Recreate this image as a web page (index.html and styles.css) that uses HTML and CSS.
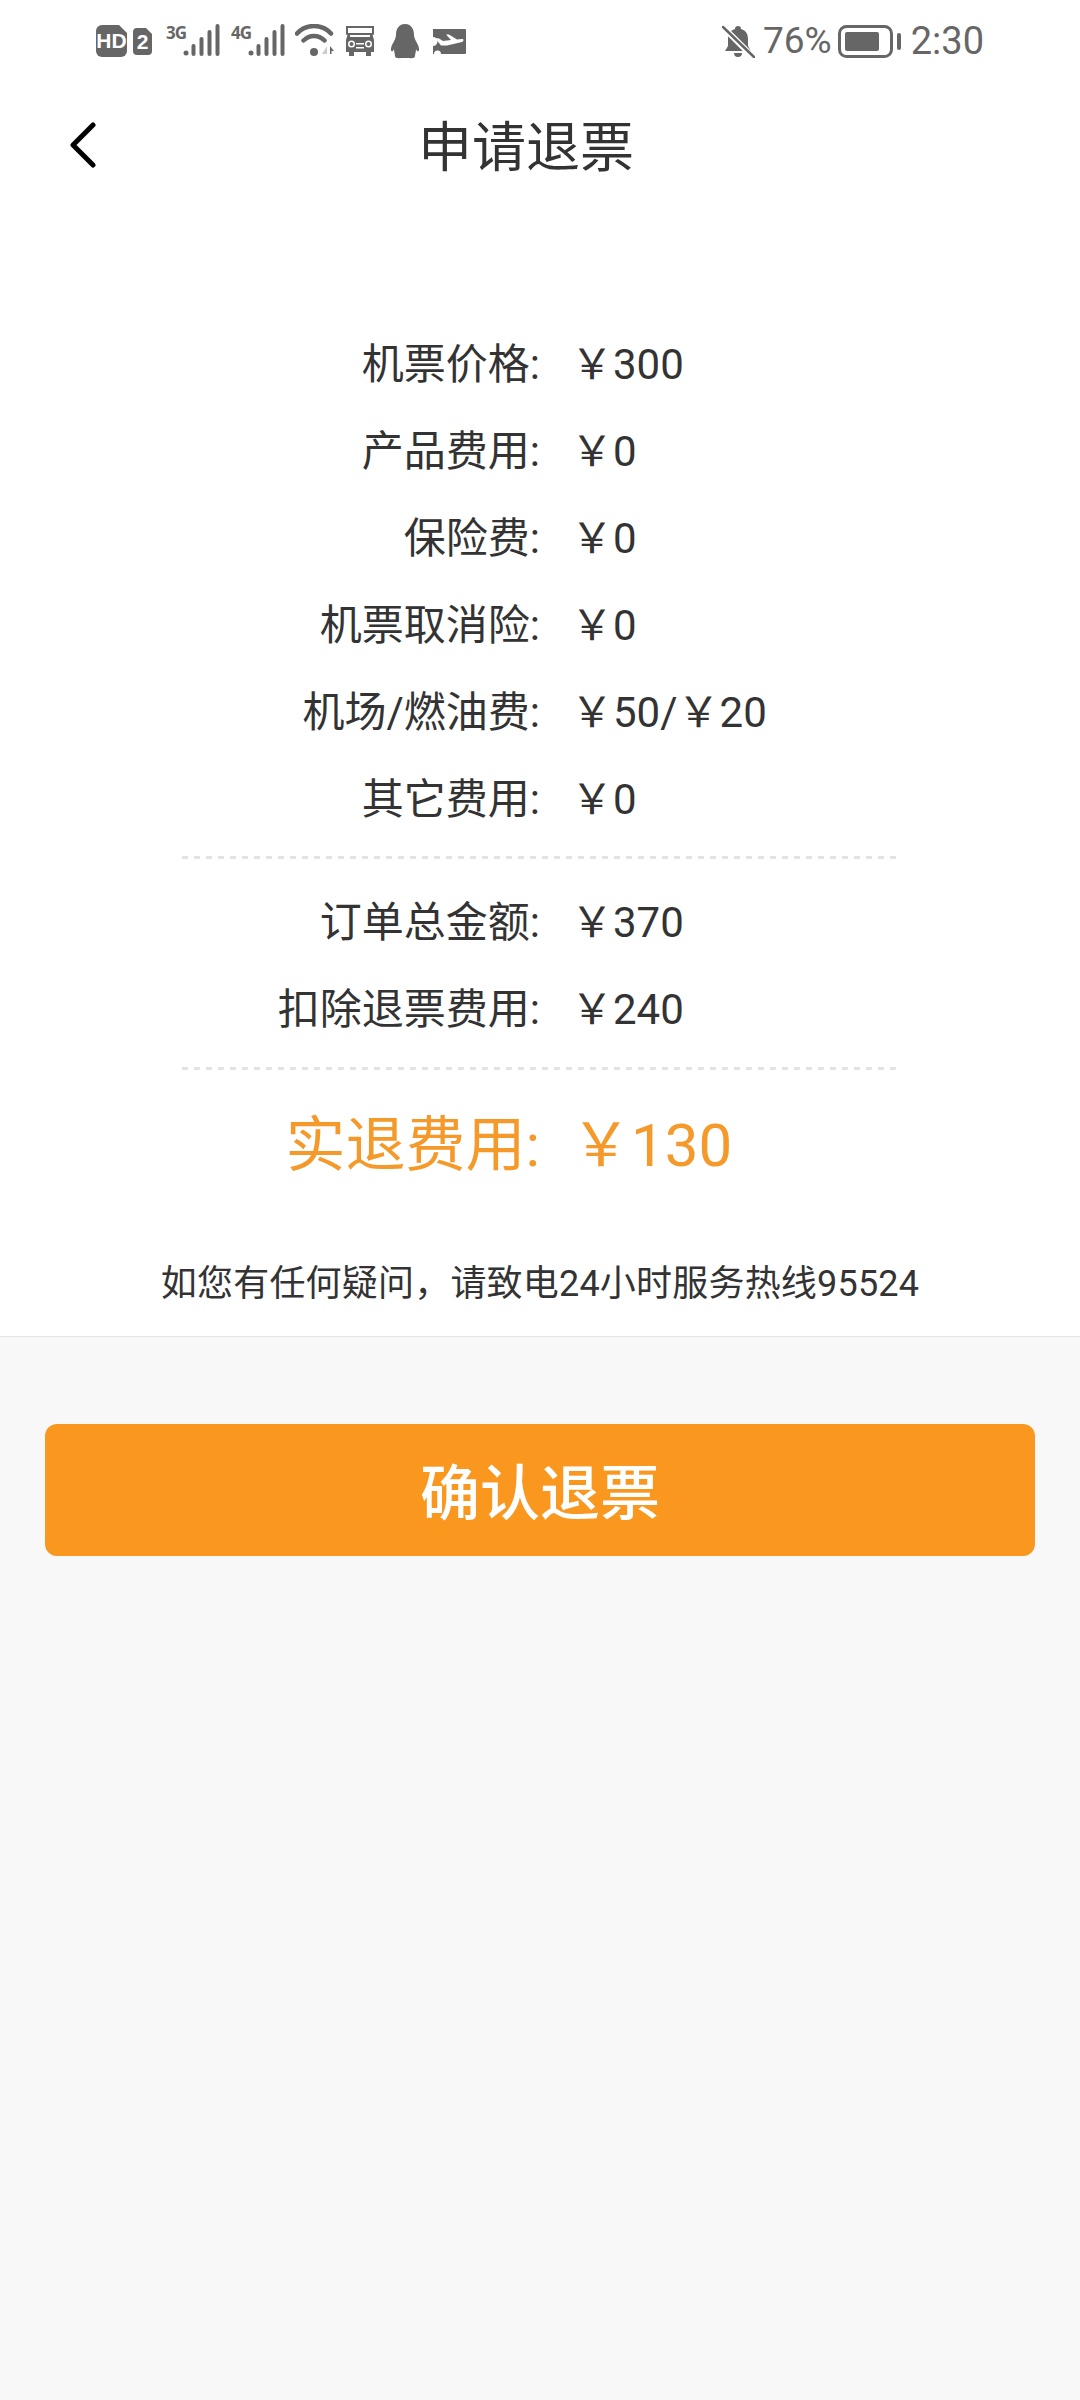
FILE: index.html
```html
<!DOCTYPE html>
<html lang="zh-CN">
<head>
<meta charset="utf-8">
<title>申请退票</title>
<link rel="stylesheet" href="styles.css">
</head>
<body>
<div class="screen">
  <main class="sheet">
    <header class="status">
      <div class="status-left">
        <svg class="ic-hd" width="31" height="32" viewBox="0 0 31 32"><path class="fill" d="M6 0H23L31 8V26a6 6 0 0 1-6 6H6a6 6 0 0 1-6-6V6a6 6 0 0 1 6-6Z"/><text class="hd-text" x="15.5" y="23">HD</text></svg>
        <svg class="ic-sim" width="19" height="27" viewBox="0 0 19 27"><path class="fill" d="M4 0H13L19 6V23a4 4 0 0 1-4 4H4a4 4 0 0 1-4-4V4a4 4 0 0 1 4-4Z"/><text class="sim-text" x="9.5" y="21">2</text></svg>
        <svg class="ic-signal" width="54" height="42" viewBox="0 -8 54 42"><text class="net-text" x="0" y="15">3G</text><circle class="fill" cx="20" cy="29" r="2.5"/><rect class="fill" x="25.500" y="20" width="4" height="12" rx="2"/><rect class="fill" x="33.500" y="13" width="4" height="19" rx="2"/><rect class="fill" x="41.500" y="6" width="4" height="26" rx="2"/><rect class="fill" x="49.500" y="0" width="4" height="32" rx="2"/></svg>
        <svg class="ic-signal ic-signal-2" width="54" height="42" viewBox="0 -8 54 42"><text class="net-text" x="0" y="15">4G</text><circle class="fill" cx="20" cy="29" r="2.5"/><rect class="fill" x="25.500" y="20" width="4" height="12" rx="2"/><rect class="fill" x="33.500" y="13" width="4" height="19" rx="2"/><rect class="fill" x="41.500" y="6" width="4" height="26" rx="2"/><rect class="fill" x="49.500" y="0" width="4" height="32" rx="2"/></svg>
        <svg class="ic-wifi" width="40" height="34" viewBox="0 0 40 34"><path class="line" d="M2 9.500C11-.5 27-.5 36 9.500M8.500 16.500C14.500 10.500 23.500 10.500 29.500 16.500" stroke-width="4.500"/><circle class="fill" cx="19" cy="28" r="4"/><path class="faint" d="M32 22v8h-5Z"/><path class="fill" d="M35 22l4 5h-2.500v3H35Z"/></svg>
        <svg class="ic-truck" width="30" height="32" viewBox="0 0 30 32"><path class="line" d="M2 9V2H28V9" stroke-width="2"/><path class="fill" d="M3 8H27L29 15V27H26V31H21V27H9V31H4V27H1V15Z"/><rect class="hole" x="5" y="10" width="20" height="2"/><circle class="hole" cx="6.500" cy="19" r="3.500"/><circle class="fill" cx="6.500" cy="19" r="2"/><circle class="hole" cx="23.500" cy="19" r="3.500"/><circle class="fill" cx="23.500" cy="19" r="2"/><rect class="hole" x="11" y="18" width="8" height="1.500"/><rect class="hole" x="11" y="22" width="8" height="1.500"/></svg>
        <svg class="ic-penguin" width="30" height="35" viewBox="0 0 30 35"><path class="fill" d="M15 0C22 0 24 6 24 11C24 14 26 17 28 21C30 26 29 28 27 27L26 25C26 28 25 30 25 32C25 35 21 34 15 34C9 34 5 35 5 32C5 30 4 28 4 25L3 27C1 28 0 26 2 21C4 17 6 14 6 11C6 6 8 0 15 0Z"/></svg>
        <svg class="ic-ticket" width="34" height="25" viewBox="0 0 34 25"><path class="fill" d="M1 0H33a1 1 0 0 1 1 1V24a1 1 0 0 1-1 1H9a3.500 3.500 0 0 0-7 0H1V17a4.500 4.500 0 0 0 0-9Z"/><path class="hole" d="M3 9L7 9.500L11 12L19 11L14 5.500H17L25 10.500L30 10C32 10 32 12 30 13L15 16.500H9Z"/></svg>
      </div>
      <div class="status-right">
        <svg class="ic-bell" width="33" height="33" viewBox="0 0 33 33"><path class="fill" d="M16 1a3 3 0 0 1 3 3C24 5.500 26 9 26 14V21L29 26H3L6 21V14C6 9 8 5.500 13 4a3 3 0 0 1 3-3ZM12 28H20A4 4 0 0 1 12 28Z"/><path class="cut" d="M2 3L31 32" stroke-width="6"/><path class="line" d="M1 2L32 32" stroke-width="2.500"/></svg>
        <span class="pct">76%</span>
        <svg class="ic-batt" width="63" height="33" viewBox="0 0 63 33"><rect class="line" x="1.500" y="1.500" width="52" height="30" rx="7" stroke-width="3"/><rect class="fill" x="7" y="7" width="34" height="19" rx="2"/><rect class="fill" x="59" y="8" width="4" height="17" rx="2"/></svg>
        <span class="time">2:30</span>
      </div>
    </header>

    <nav class="nav">
      <svg class="back" width="26" height="46" viewBox="0 0 26 46"><path d="M23 3L3 23L23 43"/></svg>
      <h1 class="title">申请退票</h1>
    </nav>

    <section class="fees">
      <div class="row"><span class="label">机票价格:</span><span class="value">￥300</span></div>
      <div class="row"><span class="label">产品费用:</span><span class="value">￥0</span></div>
      <div class="row"><span class="label">保险费:</span><span class="value">￥0</span></div>
      <div class="row"><span class="label">机票取消险:</span><span class="value">￥0</span></div>
      <div class="row"><span class="label">机场/燃油费:</span><span class="value">￥50/￥20</span></div>
      <div class="row"><span class="label">其它费用:</span><span class="value">￥0</span></div>
      <div class="rule rule-a"></div>
      <div class="row"><span class="label">订单总金额:</span><span class="value">￥370</span></div>
      <div class="row"><span class="label">扣除退票费用:</span><span class="value">￥240</span></div>
      <div class="rule rule-b"></div>
      <div class="row row-total"><span class="label">实退费用:</span><span class="value">￥130</span></div>
    </section>

    <p class="note">如您有任何疑问，请致电24小时服务热线95524</p>
  </main>

  <div class="actions">
    <button class="confirm" type="button">确认退票</button>
  </div>
</div>
</body>
</html>
```
FILE: styles.css
```css
* { box-sizing: border-box; }
html, body { margin: 0; padding: 0; }
body {
  width: 1080px;
  height: 2400px;
  background: #f8f8f8;
  font-family: Roboto, "Noto Sans CJK SC", sans-serif;
  color: #333;
  overflow: hidden;
}
.screen { display: flex; flex-direction: column; height: 2400px; }
.sheet {
  background: #fff;
  height: 1337px;
  border-bottom: 1px solid #e4e4e4;
}

.status {
  height: 80px;
  padding: 2px 96px 0 96px;
  display: flex;
  justify-content: space-between;
  align-items: center;
}
.status-left, .status-right { display: flex; align-items: center; }
.status svg { display: block; flex: none; }
.fill { fill: #666; }
.line { fill: none; stroke: #666; stroke-linecap: round; }
.hole { fill: #fff; }
.faint { fill: #ccc; }
.cut { stroke: #fff; fill: none; }
.ic-sim { margin-left: 6px; }
.ic-signal { margin: -8px 0 0 14px; }
.ic-signal-2 { margin-left: 11px; }
.ic-wifi { margin-left: 10px; }
.ic-truck { margin-left: 10px; }
.ic-penguin { margin-left: 15px; }
.ic-ticket { margin-left: 12px; }
.hd-text, .sim-text {
  fill: #fff;
  font: 700 21px "Liberation Sans", sans-serif;
  text-anchor: middle;
}
.net-text { fill: #666; font: 700 17px "Open Sans", sans-serif; letter-spacing: -1px; }
.pct, .time { font-weight: 400; color: #666; line-height: 40px; }
.pct { margin-left: 8px; font-size: 37px; }
.ic-batt { margin-left: 6px; }
.time { margin-left: 10px; font-size: 38px; }

.nav {
  height: 130px;
  padding: 0 124px 0 70px;
  display: flex;
  align-items: center;
}
.back { display: block; flex: none; }
.back path { fill: none; stroke: #000; stroke-width: 5; stroke-linecap: round; stroke-linejoin: round; }
.title {
  flex: 1;
  margin: 0;
  padding-top: 8px;
  text-align: center;
  font-size: 54px;
  font-weight: 400;
  line-height: 76px;
  color: #333;
}

.fees { padding-top: 111px; }
.row {
  display: grid;
  grid-template-columns: 540px 1fr;
  column-gap: 31px;
  height: 87px;
  line-height: 87px;
  font-size: 42px;
  color: #333;
}
.label { text-align: right; }
.value { white-space: nowrap; }
.rule {
  margin: 0 184px 0 182px;
  height: 3px;
  background: repeating-linear-gradient(90deg, #e3e3e3 0 6px, transparent 6px 12px);
}
.rule-a { margin-top: 13px; margin-bottom: 20px; }
.rule-b { margin-top: 14px; margin-bottom: 26px; }
.row-total {
  height: 100px;
  line-height: 100px;
  font-size: 60px;
  color: #f59a2a;
  column-gap: 31px;
}

.note {
  margin: 62px 0 0;
  text-align: center;
  font-size: 36px;
  line-height: 52px;
  letter-spacing: 0.2px;
  color: #333;
}

.actions { padding: 87px 45px 0; }
.confirm {
  display: block;
  width: 100%;
  height: 132px;
  border: 0;
  border-radius: 12px;
  background: #f9971f;
  color: #fff;
  font-family: Roboto, "Noto Sans CJK SC", sans-serif;
  font-size: 60px;
  font-weight: 500;
  padding: 0 0 4px;
}
```
